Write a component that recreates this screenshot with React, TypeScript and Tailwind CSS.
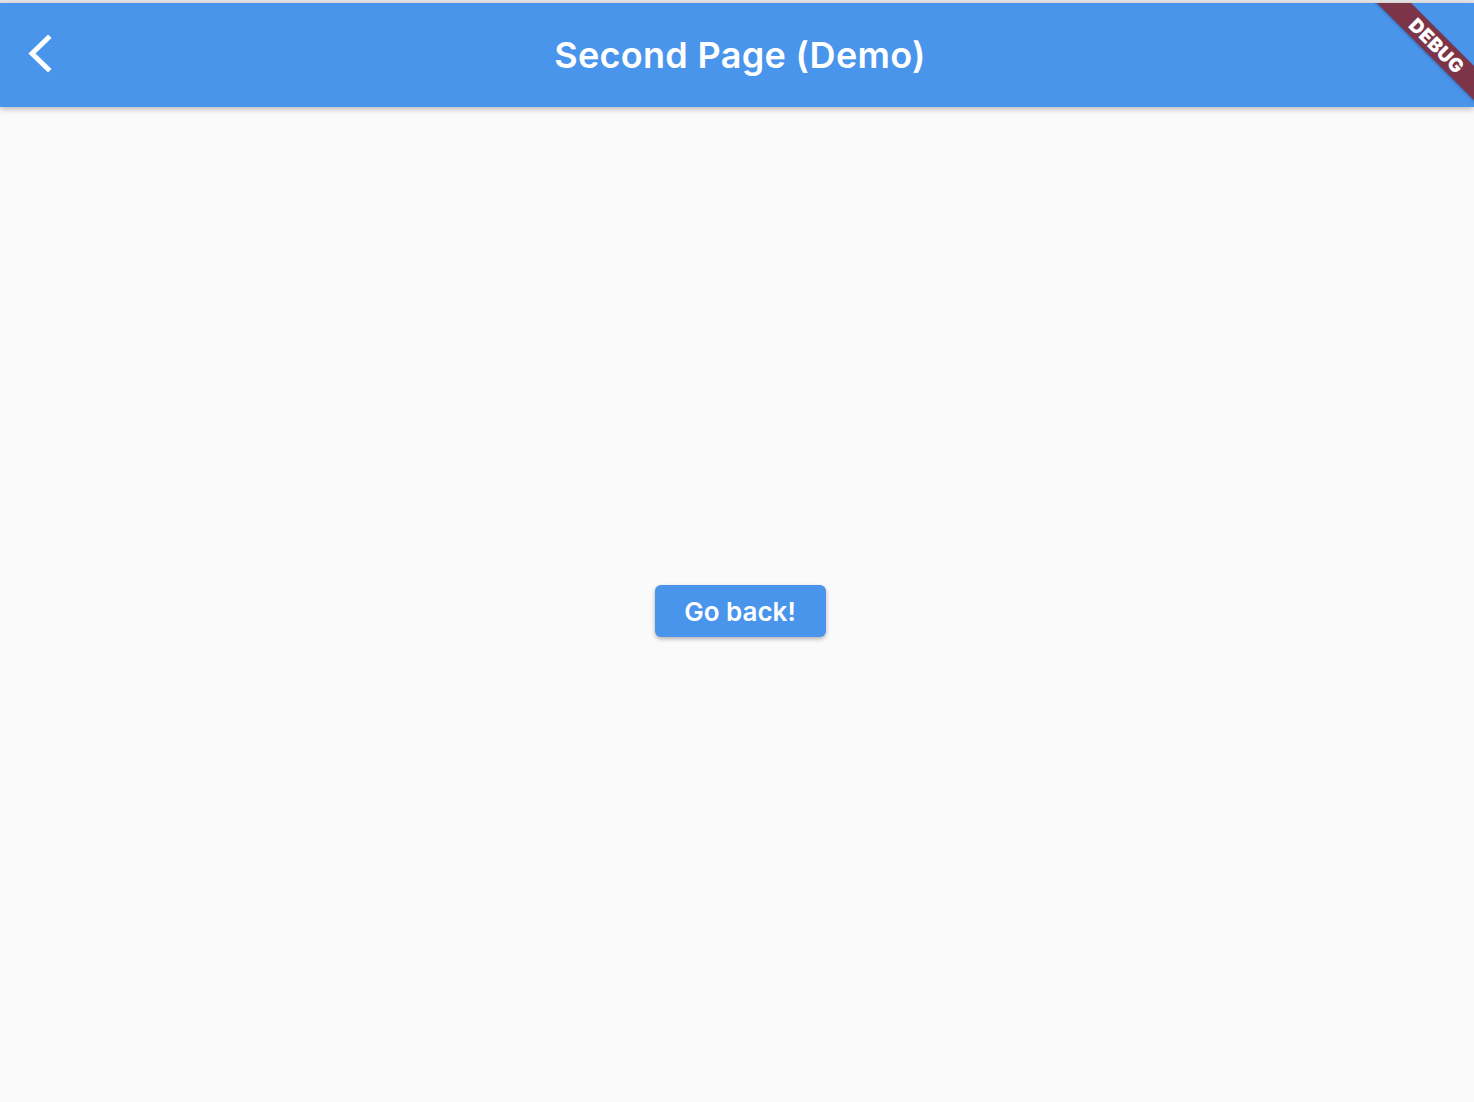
export default function App() {
  return (
    <div
      className="min-h-screen flex flex-col bg-[#fafafa]"
      style={{ fontFamily: "Inter, 'Noto Sans', sans-serif" }}
    >
      {/* window top edge */}
      <div className="h-[3px] bg-[#e6e6e6]" />

      {/* App bar */}
      <header className="relative h-[104px] bg-[#4a95ec] flex items-center shadow-[0_2px_6px_rgba(0,0,0,0.28)] z-10 overflow-hidden">
        <button className="absolute left-[14px] top-1/2 -translate-y-1/2 w-[54px] h-[54px] flex items-center justify-center text-white">
          <svg width="30" height="42" viewBox="0 0 30 42" fill="none">
            <path d="M22 4 L6 19.5 L22 35" stroke="white" strokeWidth="5" strokeLinecap="square" />
          </svg>
        </button>
        <h1 className="w-full pl-[6px] text-center text-white text-[36px] font-semibold tracking-[0.3px] leading-none">
          Second Page (Demo)
        </h1>

        {/* debug banner */}
        <div className="absolute top-[40px] right-[40px] w-0 h-0">
          <div className="absolute -left-[100px] -top-[12px] w-[200px] h-[24px] rotate-45 bg-[#7c3449] flex items-center justify-center shadow-[0_1px_3px_rgba(0,0,0,0.3)]">
            <span className="pl-[8px] pt-[1px] text-white text-[19px] font-black tracking-[0.5px] leading-none">
              DEBUG
            </span>
          </div>
        </div>
      </header>

      {/* Body */}
      <main className="flex-1 flex items-center justify-center pt-[13px] pl-[6px]">
        <button className="w-[171px] h-[52px] rounded-[6px] bg-[#4a95ec] text-white text-[26px] font-semibold shadow-[0_2px_4px_rgba(0,0,0,0.3)]">
          Go back!
        </button>
      </main>
    </div>
  );
}
